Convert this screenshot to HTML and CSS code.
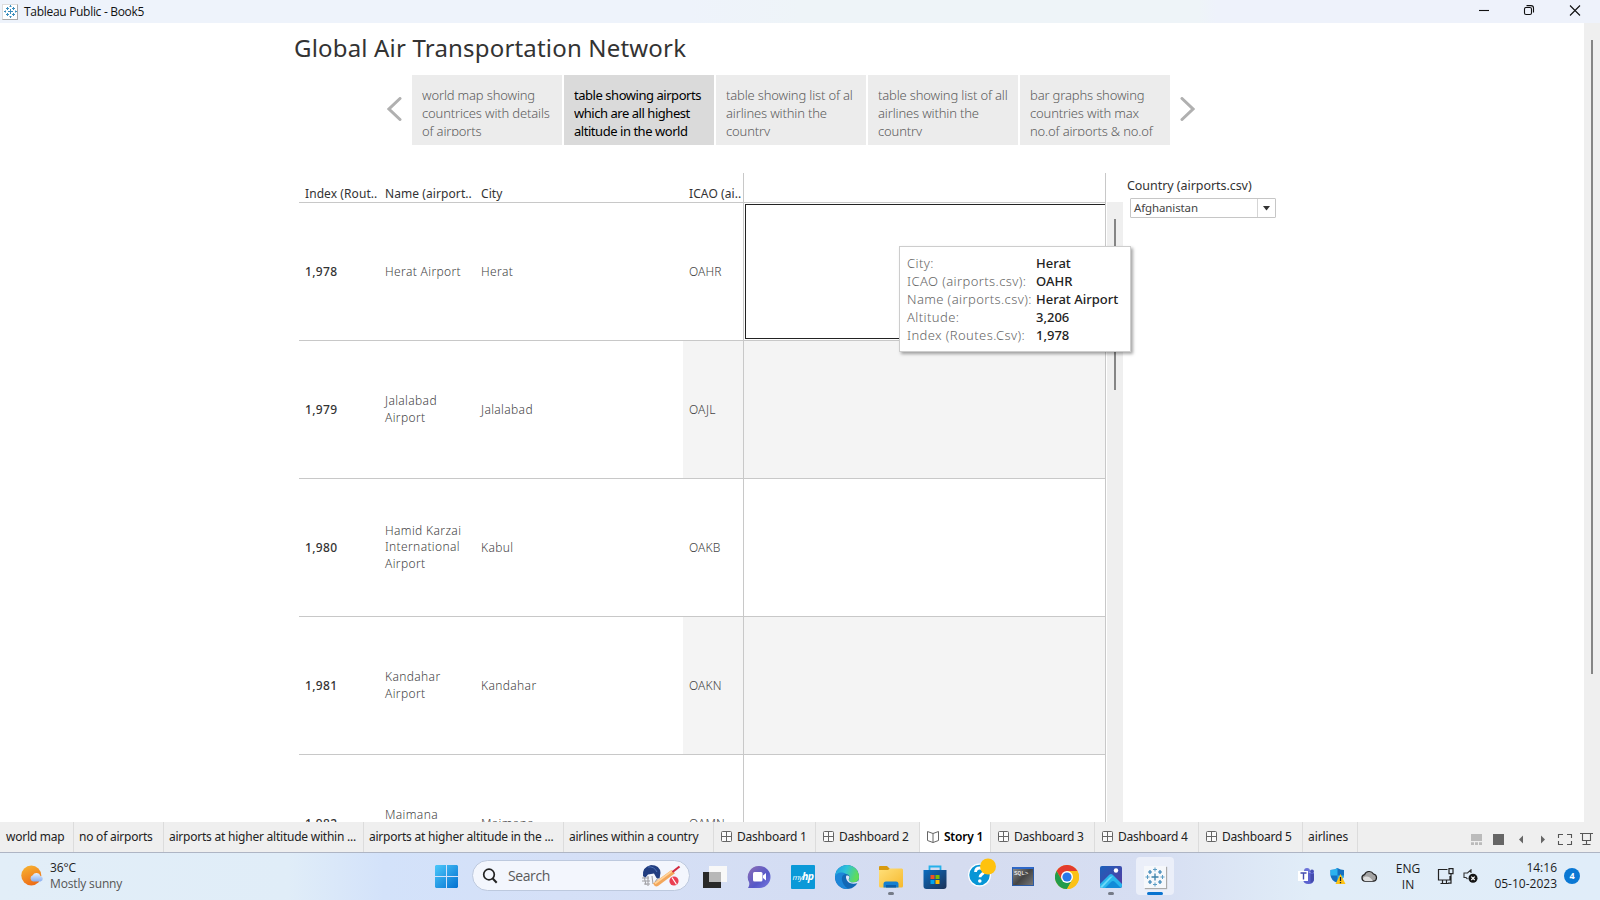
FILE: index.html
```html
<!DOCTYPE html>
<html lang="en">
<head>
<meta charset="utf-8">
<title>Tableau Public - Book5</title>
<link rel="stylesheet" href="styles.css">
</head>
<body>
<svg width="0" height="0" class="defs">
  <defs>
    <linearGradient id="gwin" x1="0" y1="0" x2="1" y2="1"><stop offset="0" stop-color="#4cc8fb"/><stop offset="1" stop-color="#0270d0"/></linearGradient>
    <linearGradient id="gsun" x1="0" y1="0" x2="0.4" y2="1"><stop offset="0" stop-color="#f7b733"/><stop offset="1" stop-color="#ee7018"/></linearGradient>
    <linearGradient id="gcl" x1="0" y1="0" x2="0" y2="1"><stop offset="0" stop-color="#e4f0ff"/><stop offset="1" stop-color="#88aef0"/></linearGradient>
    <linearGradient id="gchat" x1="0" y1="0" x2="1" y2="1"><stop offset="0" stop-color="#8f6fb5"/><stop offset=".6" stop-color="#5558c8"/><stop offset="1" stop-color="#7b7be0"/></linearGradient>
    <linearGradient id="gedge" x1="0" y1="0" x2="1" y2=".3"><stop offset="0" stop-color="#1d9be6"/><stop offset=".5" stop-color="#2fc3d8"/><stop offset="1" stop-color="#5fdc5a"/></linearGradient>
    <linearGradient id="gfold" x1="0" y1="0" x2="1" y2="1"><stop offset="0" stop-color="#ffe07a"/><stop offset="1" stop-color="#f6b92e"/></linearGradient>
    <linearGradient id="gstore" x1="0" y1="0" x2="1" y2="1"><stop offset="0" stop-color="#0a6cc0"/><stop offset="1" stop-color="#1c3157"/></linearGradient>
    <linearGradient id="gphoto" x1="0" y1="0" x2="1" y2="1"><stop offset="0" stop-color="#1a60bb"/><stop offset="1" stop-color="#5a3aa0"/></linearGradient>
    <symbol id="tab-mark" viewBox="0 0 20 20">
      <path d="M10 6.5v7M6.5 10h7" stroke="#3b7fa8" stroke-width="1.3" fill="none"/>
      <path d="M10 .5v4M8 2.5h4M10 15.500v4M8 17.500h4M2.500 8v4M.5 10h4M17.500 8v4M15.500 10h4" stroke="#5b9cc4" stroke-width="1" fill="none"/>
      <path d="M5 3v4M3 5h4M15 3v4M13 5h4M5 13v4M3 15h4M15 13v4M13 15h4" stroke="#2f7fb4" stroke-width="1.2" fill="none"/>
    </symbol>
    <symbol id="tab-mark-small" viewBox="0 0 13 13">
      <path d="M6.500 4v5M4 6.500h5M6.500 0v2M5.500 1.500h2M6.500 11v2M5.500 11.500h2M1.500 5.500v2M0 6.500h2M11.500 5.500v2M11 6.500h2M3.500 2v3M2 3.500h3M9.500 2v3M8 3.500h3M3.500 8v3M2 9.500h3M9.500 8v3M8 9.500h3" stroke="#3c8fbe" fill="none"/>
    </symbol>
    <symbol id="dash" viewBox="0 0 11 11"><rect x=".5" y=".5" width="10" height="10" rx="1" fill="#fafafa" stroke="#666"/><path d="M5.500 0v11M0 5.500h11" stroke="#666"/></symbol>
  </defs>
</svg>

<header class="titlebar">
  <span class="app-icon"><svg width="13" height="13"><use href="#tab-mark-small"/></svg></span>
  <span class="app-title">Tableau Public - Book5</span>
  <svg class="win-controls" width="108" height="12" viewBox="0 0 108 12" fill="none" stroke="#111" stroke-width="1.1">
    <path d="M0 5.500h10"/>
    <rect x="45.500" y="2.500" width="7" height="7" rx="1.500"/><path d="M47.500.6h4.500q2.500 0 2.500 2.500v4.400"/>
    <path d="M91 .5l10 10M101 .5l-10 10"/>
  </svg>
</header>

<main class="workspace">
  <div class="story">
    <h1 class="story-title">Global Air Transportation Network</h1>
    <nav class="navigator">
      <svg class="arrow" width="15" height="24" viewBox="0 0 15 24"><path d="M13 1.500L2 12l11 10.500"/></svg>
      <div class="points">
        <div class="point"><p>world map showing<br>countrices with details<br>of airports</p></div>
        <div class="point active"><p>table showing airports<br>which are all highest<br>altitude in the world</p></div>
        <div class="point"><p>table showing list of al<br>airlines within the<br>country</p></div>
        <div class="point"><p>table showing list of all<br>airlines within the<br>country</p></div>
        <div class="point"><p>bar graphs showing<br>countries with max<br>no.of airports &amp; no.of</p></div>
      </div>
      <svg class="arrow" width="15" height="24" viewBox="0 0 15 24"><path d="M2 1.500l11 10.500L2 22.500"/></svg>
    </nav>
    <div class="content">
      <section class="sheet">
        <div class="row head"><span>Index (Rout..</span><span>Name (airport..</span><span>City</span><span class="icao">ICAO (ai..</span><span class="pane"></span></div>
        <div class="row"><span class="idx">1,978</span><span class="one">Herat Airport</span><span class="one">Herat</span><span class="icao one">OAHR</span><span class="pane"><i class="selected"></i></span></div>
        <div class="row band"><span class="idx">1,979</span><span>Jalalabad<br>Airport</span><span class="one">Jalalabad</span><span class="icao one">OAJL</span><span class="pane"></span></div>
        <div class="row"><span class="idx">1,980</span><span>Hamid Karzai<br>International<br>Airport</span><span class="one">Kabul</span><span class="icao one">OAKB</span><span class="pane"></span></div>
        <div class="row band"><span class="idx">1,981</span><span>Kandahar<br>Airport</span><span class="one">Kandahar</span><span class="icao one">OAKN</span><span class="pane"></span></div>
        <div class="row"><span class="idx">1,982</span><span>Maimana<br>Airport</span><span class="one">Maimana</span><span class="icao one">OAMN</span><span class="pane"></span></div>
      </section>
      <div class="sheet-scroll"><i></i></div>
      <aside class="filter">
        <label>Country (airports.csv)</label>
        <div class="select"><span>Afghanistan</span><b><svg width="8" height="5"><path d="M0 0h7L3.500 4.500z" fill="#333"/></svg></b></div>
      </aside>
    </div>
  </div>
  <div class="page-scroll"><i></i></div>
  <dl class="tooltip">
    <dt>City:</dt><dd>Herat</dd>
    <dt>ICAO (airports.csv):</dt><dd>OAHR</dd>
    <dt>Name (airports.csv):</dt><dd>Herat Airport</dd>
    <dt>Altitude:</dt><dd>3,206</dd>
    <dt>Index (Routes.Csv):</dt><dd>1,978</dd>
  </dl>
</main>

<nav class="tabs">
  <div class="tab t1">world map</div>
  <div class="tab t2">no of airports</div>
  <div class="tab t3">airports at higher altitude within ...</div>
  <div class="tab t3">airports at higher altitude in the ...</div>
  <div class="tab t4">airlines within a country</div>
  <div class="tab d1"><svg width="11" height="11"><use href="#dash"/></svg>Dashboard 1</div>
  <div class="tab d2"><svg width="11" height="11"><use href="#dash"/></svg>Dashboard 2</div>
  <div class="tab current"><svg width="12" height="12" viewBox="0 0 12 12" fill="none" stroke="#666"><path d="M.5.500L6 2.500L11.500.500V9.500L6 11.500L.5 9.500zM6 2.500v9"/></svg>Story 1</div>
  <div class="tab d2"><svg width="11" height="11"><use href="#dash"/></svg>Dashboard 3</div>
  <div class="tab d2"><svg width="11" height="11"><use href="#dash"/></svg>Dashboard 4</div>
  <div class="tab d2"><svg width="11" height="11"><use href="#dash"/></svg>Dashboard 5</div>
  <div class="tab t5">airlines</div>
  <svg class="tab-tools" width="124" height="14" viewBox="0 0 124 14">
    <path d="M0 2h11v7H0zM0 10.200h3v2.800H0zM4 10.200h3v2.800H4zM8 10.200h3v2.800H8z" fill="#bbb"/>
    <rect x="22" y="2" width="11" height="11" fill="#666"/>
    <path d="M52 3.500v8L48 7.500zM70 3.500v8l4-4z" fill="#666"/>
    <path d="M87.500 6V2.500H92M96 2.500h4.500V6M100.500 9v3.500H96M92 12.500h-4.500V9M109 1.500h13M111.500 2v6.500h8V2M115.500 8.500V12M111.500 12.500h8" fill="none" stroke="#555" stroke-width="1.100"/>
  </svg>
</nav>

<footer class="taskbar">
  <div class="weather">
    <svg width="23" height="22" viewBox="0 0 23 22"><circle cx="10.300" cy="10.500" r="10" fill="url(#gsun)"/><path d="M12 16.500a3.300 3.300 0 0 1-.3-6.300A4.300 4.300 0 0 1 19.500 11a2.800 2.800 0 0 1 0 5.500z" fill="url(#gcl)"/></svg>
    <p>36°C<br><span>Mostly sunny</span></p>
  </div>
  <svg class="start" width="23" height="23" viewBox="0 0 23 23"><path d="M1 0h10v11H0V1zM12 0h10l1 1v10H12zM0 12h11v11H1l-1-1zM12 12h11v10l-1 1H12z" fill="url(#gwin)"/></svg>
  <div class="search">
    <svg width="16" height="16" viewBox="0 0 16 16" fill="none" stroke="#222" stroke-width="1.700"><circle cx="7" cy="6.500" r="5.300"/><path d="M10.700 10.500l4 4.300" stroke-width="2"/></svg>
    <span>Search</span>
    <svg width="40" height="24" viewBox="0 0 40 24">
      <path d="M1 14h7M1 17h8M3 20h6M3 12l2 9M7 12v10M11 12l1 8M15 9l2 5-3 4" fill="none" stroke="#a0a0a4" stroke-width="1.100"/>
      <path d="M2 12Q1 3 10 1q9 0 9.500 8l-1 5.500-3-.5-2.500-4.500-6 1-2.500 3z" fill="#213d80"/><path d="M7 3q6-1 9 5" fill="none" stroke="#4d6fb4"/>
      <path d="M12 19.500L30.500 6l3.500 3.200L17 22q-3 1.500-5-2.500z" fill="#f3a75c"/><path d="M14 19.500L31 7" stroke="#ffd49b" stroke-width="1.600"/>
      <path d="M31.500 8l7-5.500" stroke="#d2293f" stroke-width="2.200"/>
      <circle cx="33" cy="17" r="4.600" fill="#ea3f52"/><path d="M31 13.500l4.500 7" stroke="#fff" stroke-width="1.200"/>
    </svg>
  </div>
  <div class="apps">
    <div><svg width="24" height="24" viewBox="0 0 24 24"><path d="M6 1h18v16H6z" fill="#f8f8f8"/><path d="M0 7h18v16H0z" fill="#292929"/><path d="M6 7h12v10H6z" fill="#b8b8b8"/></svg></div>
    <div><svg width="24" height="24" viewBox="0 0 24 24"><path d="M12.500 1a11 11 0 1 1 0 22H1q2-3 1-6A11 11 0 0 1 12.500 1z" fill="url(#gchat)"/><rect x="6" y="7" width="9.500" height="9.500" rx="1.500" fill="#fff"/><path d="M16 10.500L19 8v7.500l-3-2.500z" fill="#fff"/></svg></div>
    <div><span class="myhp"><em>my</em><b>hp</b></span></div>
    <div><svg width="24" height="24" viewBox="0 0 24 24"><circle cx="12" cy="12" r="12" fill="#1267b4"/><path d="M0 12A12 12 0 0 1 24 12c0 4-3 5.500-6 5.500-3.500 0-5-1.500-4-3 1.500-2.500 0-5.500-3-5.500C6 7.500 1.500 8.500 0 12z" fill="url(#gedge)"/><path d="M0 12c1-4 6-6 11-3-4 .5-5 4-3.500 8 1.200 3.500 4 6 6.500 6.800C6 25 0 19 0 12z" fill="#1d86d8"/><path d="M11.500 10.500c2.500-.5 3.500 1.500 2.500 3-1 1.800.5 4 4 4 2 0 4.500-.8 5.500-2L23 18c-4 1.500-9 1-11-2.500-1-2-1.500-4-.5-5z" fill="#dde4f6"/></svg></div>
    <div class="running"><svg width="24" height="24" viewBox="0 0 24 24"><path d="M0 2q0-1 1-1h7l3 3v4H0z" fill="#d89a10"/><path d="M0 5h9l2-1.500h12l1 1V21q0 1.500-1.500 1.500h-21Q0 22.500 0 21z" fill="url(#gfold)"/><path d="M4.500 22.500V19q0-2.500 2.500-2.500h10q2.500 0 2.500 2.500v3.500z" fill="#1580d0"/><path d="M7 20h10v2.500H7z" fill="#0b5ca8"/></svg></div>
    <div><svg width="24" height="24" viewBox="0 0 24 24"><path d="M6.500 6V1.500h11V6" fill="none" stroke="#25b0ea" stroke-width="1.800"/><path d="M.5 5h23v16q0 3-3 3h-17q-3 0-3-3z" fill="url(#gstore)"/><path d="M7.500 10h4v4h-4z" fill="#f25022"/><path d="M12.500 10h4v4h-4z" fill="#7fba00"/><path d="M7.500 15h4v4h-4z" fill="#00a4ef"/><path d="M12.500 15h4v4h-4z" fill="#ffb900"/></svg></div>
    <div><svg class="help" width="28" height="29" viewBox="0 0 28 29"><circle cx="11.500" cy="17" r="10.900" fill="#0796d6" stroke="#fff" stroke-width="1.300"/><path d="M7.500 14q.2-4 4.300-4 4 0 4 3.200 0 2-2.200 3.300-1.600 1-1.600 2.800" fill="none" stroke="#fff" stroke-width="2.800"/><circle cx="11.800" cy="23" r="1.800" fill="#fff"/><circle cx="20" cy="8.500" r="8" fill="#ffc20e"/></svg></div>
    <div><span class="sql">SQL&gt;</span></div>
    <div><svg width="24" height="24" viewBox="0 0 24 24"><circle cx="12" cy="12" r="12" fill="#fbc116"/><path d="M1.600 6A12 12 0 0 1 22.400 6H12l-5.200 9z" fill="#e33b2e"/><path d="M1.600 6A12 12 0 0 0 12 24l5.200-9H6.800z" fill="#229c4b"/><path d="M12 6h10.400A12 12 0 0 1 12 24l5.200-9z" fill="#fbc116"/><circle cx="12" cy="12" r="6" fill="#fff"/><circle cx="12" cy="12" r="4.600" fill="#2a78ea"/></svg></div>
    <div class="running"><svg width="22" height="22" viewBox="0 0 22 22"><rect width="22" height="22" rx="2" fill="url(#gphoto)"/><path d="M0 18L9 9q2-2 4 0l9 9v2q0 2-2 2H2q-2 0-2-2z" fill="#29b6ec"/><path d="M0 21l10-10 3-1-11 12z" fill="#6ad8f8"/><path d="M11 16q2-2 4 0l6 6H5z" fill="#128bd8"/><circle cx="16" cy="4.500" r="2.200" fill="#fff"/></svg></div>
    <div class="open"><span><svg width="20" height="20"><use href="#tab-mark"/></svg></span></div>
  </div>
  <div class="tray">
    <svg width="17" height="16" viewBox="0 0 17 16"><circle cx="9" cy="3" r="3" fill="#6b72d8"/><circle cx="14" cy="3.500" r="2" fill="#4750b8"/><path d="M5 5h11v6q0 5-5.500 5Q5 16 5 11z" fill="#5b62cf"/><path d="M12.500 6H16v5q0 3-3.500 4z" fill="#444cae"/><path d="M0 3h10v10H0z" fill="#fff"/><path d="M2.500 5h6M5.500 5v6.500" stroke="#444cae" stroke-width="1.400"/></svg>
    <svg width="16" height="16" viewBox="0 0 16 16"><path d="M7.500 0q3 2 6.500 2v5q0 5-6.500 8Q.5 12 .5 7V2Q5 2 7.500 0z" fill="#1470c0"/><path d="M7.500 0v7.500H.5V2Q5 2 7.500 0zM7.500 7.500H14Q13 12 7.500 15z" fill="#2bb2ee"/><path d="M10.500 6l5 10h-10z" fill="#ffc414"/><path d="M10.500 9v4M10.500 14v1.200" stroke="#222" stroke-width="1.300"/></svg>
    <svg width="17" height="12" viewBox="0 0 17 12"><path d="M4 11.200a3.300 3.300 0 0 1-.5-6.500A5 5 0 0 1 12.500 4a3.700 3.700 0 0 1 .3 7.200z" fill="#a3a3a3" stroke="#222" stroke-width="1.200"/><path d="M2 8q5-4 10 3H4q-2-.5-2-3z" fill="#ddd"/></svg>
    <p class="lang">ENG<br>IN</p>
    <svg width="17" height="17" viewBox="0 0 17 17" fill="none" stroke="#222" stroke-width="1.200"><path d="M10.500 1.500h-9v10.500h11.500V8M5.500 12v3.500M9.500 12v3.500M3.500 15.500h8M12 .6h4v5h-4zM14 5.600v9.500h-3"/></svg>
    <svg width="15" height="14" viewBox="0 0 15 14"><path d="M8 4V.8L4.500 4H1v4.500h2l1.500 1.500" fill="none" stroke="#333" stroke-width="1.100"/><circle cx="10" cy="9.300" r="4.500" fill="#151515"/><path d="M8.300 7.600l3.400 3.400M11.700 7.600l-3.400 3.400" stroke="#fff" stroke-width="1.100"/></svg>
    <p class="clock">14:16<br>05-10-2023</p>
    <b class="badge">4</b>
  </div>
</footer>
</body>
</html>
```
FILE: styles.css
```css
* { box-sizing: border-box; }
body { margin: 0; width: 1600px; height: 900px; overflow: hidden; display: flex; flex-direction: column; background: #fff; font-family: "Noto Sans", "Open Sans", sans-serif; color: #333; }
p, h1, dl, dd { margin: 0; }
svg { display: block; flex: none; }
.defs { position: absolute; }

.titlebar { height: 23px; flex: none; display: flex; align-items: center; background: linear-gradient(90deg, #eef3fb 43%, #eef4f8 50%, #eef4f8 75%, #eef2fb 76%); }
.app-icon { width: 16px; height: 16px; margin-left: 2px; background: #fff; border: 1px solid #ddd; border-right-color: #aaa; border-bottom-color: #aaa; display: flex; align-items: center; justify-content: center; }
.app-title { margin-left: 6px; font: 12px/22px "Open Sans", sans-serif; color: #111; letter-spacing: -.3px; }
.win-controls { margin-left: auto; margin-right: 13px; margin-top: -2px; }

.workspace { position: relative; height: 799px; flex: none; display: flex; justify-content: space-between; overflow: hidden; }
.story { width: 1300px; padding-left: 294px; }
.story-title { font-size: 24px; line-height: 32px; font-weight: 400; padding-top: 9px; height: 52px; letter-spacing: .18px; white-space: nowrap; }
.navigator { display: flex; align-items: center; height: 70px; padding-left: 93px; gap: 10px; }
.arrow { margin-top: -3px; fill: none; stroke: #b0b0b0; stroke-width: 3; stroke-linecap: round; }
.points { display: flex; gap: 2px; }
.point { width: 150px; height: 70px; padding: 11px 9px 9px 10px; background: #ececec; }
.point p { height: 50px; overflow: hidden; font-size: 13px; line-height: 18px; font-weight: 300; color: #5c5c5c; letter-spacing: -.16px; white-space: nowrap; }
.point.active { background: #dadada; }
.point.active p { color: #000; font-weight: 400; letter-spacing: -.46px; }

.content { display: flex; margin: 28px 0 0 5px; height: 660px; }
.sheet { width: 807px; border-right: 1px solid #c8c8c8; }
.row { display: grid; grid-template-columns: 80px 96px 208px 60px 1fr; height: 138px; border-bottom: 1px solid #c8c8c8; font-size: 12px; line-height: 16.500px; font-weight: 300; color: #444; letter-spacing: .36px; }
.row > span { display: flex; align-items: center; padding-left: 6px; white-space: nowrap; }
.row .one, .row .idx { padding-top: 2px; }
.row .icao { letter-spacing: .1px; }
.row .pane { padding: 1px 0 1px 1px; border-left: 1px solid #c8c8c8; }
.head { height: 30px; color: #333; font-weight: 400; letter-spacing: .08px; }
.head > span { align-items: flex-end; padding-bottom: 0; }
.row .idx { color: #333; font-weight: 500; }
.band .icao, .band .pane { background: #f4f4f4; }
.selected { width: 100%; height: 135px; border: 1px solid #222; border-right: 0; }
.sheet-scroll { width: 16px; margin: 29px 0 0 1px; background: #efefef; padding: 17px 0 0 7px; }
.sheet-scroll i, .page-scroll i { display: block; width: 2px; height: 171px; background: #858585; }
.filter { margin-left: 4px; padding-top: 4px; }
.filter label { display: block; font-size: 12.500px; line-height: 18px; letter-spacing: -.05px; white-space: nowrap; }
.select { display: flex; align-items: center; margin: 3px 0 0 3px; width: 146px; height: 20px; border: 1px solid #c6c6c6; border-radius: 1px; font-size: 11.500px; letter-spacing: -.12px; }
.select span { flex: 1; padding: 0 0 2px 3px; color: #444; }
.select b { width: 18px; height: 18px; border-left: 1px solid #d5d5d5; display: flex; align-items: center; justify-content: center; }
.page-scroll { width: 16px; padding: 17px 0 0 7px; background: #efefef; }
.page-scroll i { height: 634px; }
.tooltip { position: absolute; left: 899px; top: 223px; width: 232px; height: 106px; padding: 7px 0 0 7px; display: grid; grid-template-columns: 129px 1fr; grid-auto-rows: 18px; background: #fff; border: 1px solid #cdcdcd; box-shadow: 2px 2px 3px rgba(0,0,0,.35); font-size: 13px; line-height: 18px; white-space: nowrap; }
.tooltip dt { color: #666; font-weight: 300; letter-spacing: .4px; }
.tooltip dd { font-weight: 500; color: #222; }

.tabs { height: 31px; flex: none; display: flex; background: #efefef; border-bottom: 1px solid #aeb5c4; font-size: 12px; line-height: 28px; letter-spacing: -.23px; color: #222; }
.tab { display: flex; align-items: center; gap: 5px; height: 30px; padding: 0 0 0 5px; border-right: 1px solid #dcdcdc; white-space: nowrap; }
.tab svg { margin-top: -1px; }
.t1 { width: 74px; padding-left: 6px; }
.t2 { width: 90px; }
.t3 { width: 200px; }
.t4 { width: 150px; }
.t5 { width: 55px; letter-spacing: -.1px; }
.d1 { width: 102px; padding-left: 7px; }
.d2 { width: 104px; padding-left: 7px; }
.current { width: 71px; padding-left: 7px; background: #fff; color: #000; font-weight: 600; }
.tab-tools { margin: 10px 5px 0 auto; }

.taskbar { height: 47px; flex: none; display: flex; align-items: flex-start; background: linear-gradient(90deg, #e2eef8 0, #e0edf8 18%, #d3e2fa 24%, #d5e0f7 35%, #d4ddf3 50%, #d5dcf0 60%, #d6def2 72%, #e1edf8 82%, #e0edf9 100%); font-family: "Open Sans", sans-serif; font-size: 12px; line-height: 16px; color: #1c1c1c; }
.weather { display: flex; width: 435px; padding: 7px 0 0 21px; gap: 6px; letter-spacing: -.15px; }
.weather svg { margin-top: 5px; }
.weather span { color: #555; }
.start { margin-top: 12px; }
.search { display: flex; align-items: center; margin: 7px 3px 0 14px; width: 218px; height: 31px; border: 1px solid #bdc9de; border-radius: 16px; background: #f3f6fd; padding: 0 8px 0 9px; font-size: 14px; letter-spacing: -.4px; color: #5a5a5a; gap: 10px; }
.search span { flex: 1; }
.apps { display: flex; }
.apps > div { position: relative; width: 44px; height: 47px; display: flex; justify-content: center; align-items: center; }
.apps .running::after { content: ""; position: absolute; left: 19px; bottom: 5px; width: 6px; height: 3px; border-radius: 2px; background: #757b87; }
.apps .help { margin: -8px 0 0 5px; }
.myhp { width: 24px; height: 24px; background: #0a99d8; color: #fff; border-radius: 1px; font-size: 8px; line-height: 23px; text-align: center; letter-spacing: -.6px; }
.myhp b { font-size: 10.500px; font-style: italic; }
.sql { width: 22px; height: 19px; border: 1px solid #2b5ca8; border-top: 2px solid #2e68c8; background: linear-gradient(135deg, #888, #444 50%, #777); color: #fff; font: 6px/9px "Liberation Mono", monospace; padding-left: 1px; }
.apps .open::before { content: ""; position: absolute; left: 3px; top: 4px; width: 38px; height: 38px; border-radius: 4px; background: #ebeff9; }
.apps .open::after { content: ""; position: absolute; left: 14px; bottom: 5px; width: 16px; height: 3px; border-radius: 2px; background: #0a74d0; }
.open span { position: relative; width: 22px; height: 22px; background: #f6f8fb; box-shadow: 1px 1px 1px #aaa; display: flex; align-items: center; justify-content: center; }
.tray { display: flex; align-items: center; height: 46px; margin-left: auto; padding-right: 20px; }
.tray svg:nth-of-type(2) { margin-left: 15px; }
.tray svg:nth-of-type(3) { margin-left: 15px; }
.lang { width: 30px; margin: 1px 14px 0 15px; text-align: center; }
.tray svg:nth-of-type(5) { margin-left: 9px; }
.clock { width: 79px; margin-top: 0; text-align: right; }
.badge { width: 16px; height: 16px; margin-left: 7px; border-radius: 8px; background: #0a78d4; color: #fff; font-size: 9px; text-align: center; }
```
